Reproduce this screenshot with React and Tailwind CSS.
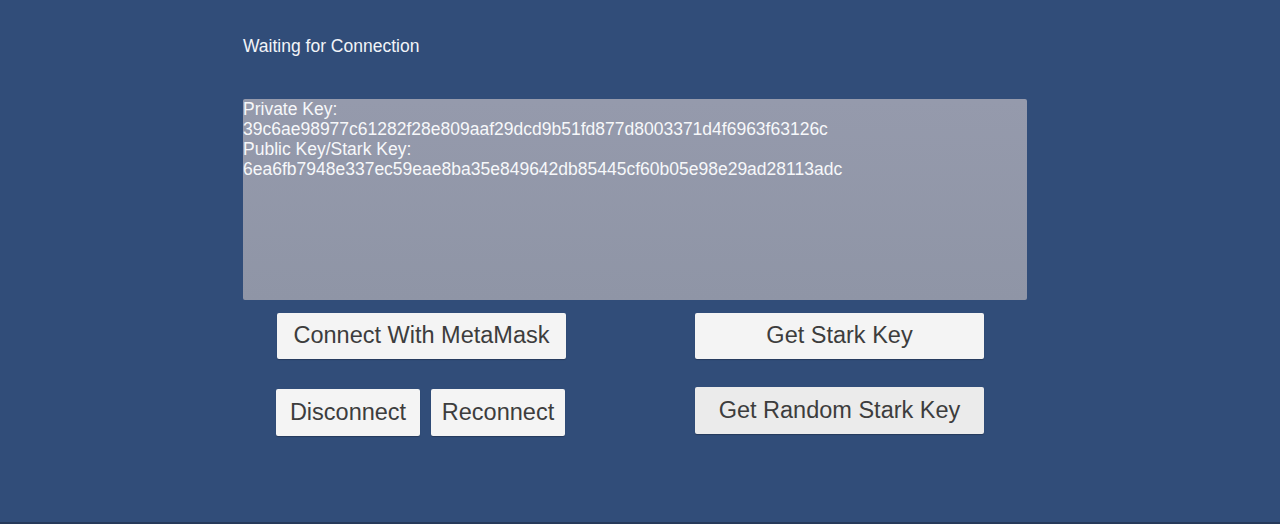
import React from 'react';

const font = { fontFamily: '"Liberation Sans", Arial, sans-serif' };

const Button = ({ children, className = '' }) => (
  <button
    className={`flex items-center justify-center rounded-[2px] text-[23.5px] leading-none text-[#3d3d3d] shadow-[0_1px_1px_rgba(0,0,0,0.25)] ${className}`}
  >
    {children}
  </button>
);

export default function App() {
  return (
    <div
      style={font}
      className="h-[524px] w-[1280px] overflow-hidden bg-[#314d79] border-b-2 border-[#26395a]"
    >
      <div className="pl-[243px] pt-[36px]">
        <p className="text-[17.5px] leading-[20px] text-[#f2f4f8]">Waiting for Connection</p>

        <div className="mt-[43px] h-[201px] w-[784px] rounded-[2px] bg-gradient-to-b from-[#959aac] to-[#8f95a6] text-[17.5px] leading-[20px] text-[#f7f8fa]">
          <p>Private Key:</p>
          <p>39c6ae98977c61282f28e809aaf29dcd9b51fd877d8003371d4f6963f63126c</p>
          <p>Public Key/Stark Key:</p>
          <p>6ea6fb7948e337ec59eae8ba35e849642db85445cf60b05e98e29ad28113adc</p>
        </div>

        <div className="mt-[13px] flex">
          <div className="ml-[34px] flex flex-col">
            <Button className="h-[46px] w-[289px] bg-[#f4f4f4]">Connect With MetaMask</Button>
            <div className="mt-[30px] -ml-px flex gap-[11px]">
              <Button className="h-[47px] w-[144px] bg-[#f4f4f4]">Disconnect</Button>
              <Button className="h-[47px] w-[134px] bg-[#f4f4f4]">Reconnect</Button>
            </div>
          </div>
          <div className="ml-[129px] flex flex-col">
            <Button className="h-[46px] w-[289px] bg-[#f4f4f4]">Get Stark Key</Button>
            <Button className="mt-[28px] h-[47px] w-[289px] bg-[#ebebeb]">Get Random Stark Key</Button>
          </div>
        </div>
      </div>
    </div>
  );
}
